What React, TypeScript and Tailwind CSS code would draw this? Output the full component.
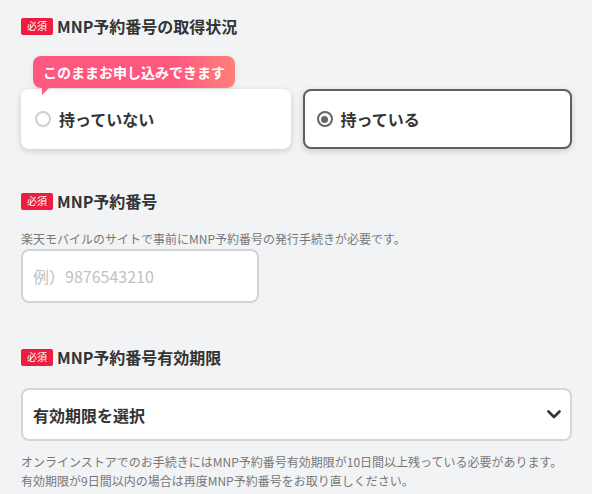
const font = {
  fontFamily: '"Noto Sans CJK JP", "Noto Sans", sans-serif',
};

function Required() {
  return (
    <span className="inline-flex h-[17px] w-8 items-center justify-center rounded-[2px] bg-[#ee1c40] text-[10px] leading-none text-white">
      必須
    </span>
  );
}

function SectionTitle({ children }: { children: React.ReactNode }) {
  return (
    <div className="flex h-6 items-center gap-1">
      <Required />
      <h2 className="text-base font-bold leading-6 text-[#333]">{children}</h2>
    </div>
  );
}

export default function App() {
  return (
    <div
      className="min-h-[494px] bg-[#f2f3f5] pb-4 pl-[21px] pr-[20px] pt-[14px] text-[#333]"
      style={font}
    >
      {/* 取得状況 */}
      <SectionTitle>MNP予約番号の取得状況</SectionTitle>
      <div className="mt-[51px] grid grid-cols-2 gap-3">
        <label className="relative flex h-[60px] items-center gap-2 rounded-lg border-2 border-white bg-white pl-3 shadow-[0_2px_6px_rgba(0,0,0,0.16)]">
          <div className="absolute -top-[35px] left-[10px] z-10">
            <div className="flex h-8 items-center rounded-lg bg-gradient-to-r from-[#ff5880] from-70% to-[#ff7f7a] px-[10px] text-sm font-bold text-white shadow-[0_2px_6px_rgba(0,0,0,0.08)]">
              このままお申し込みできます
            </div>
            <div className="ml-[9px] h-0 w-0 border-r-[7px] border-t-[7px] border-r-transparent border-t-[#ff5a7f]" />
          </div>
          <span className="h-4 w-4 rounded-full border-2 border-[#cfcfcf]" />
          <span className="text-base font-bold">持っていない</span>
        </label>
        <label className="flex h-[60px] items-center gap-2 rounded-lg border-2 border-[#5f5f5f] bg-white pl-3 shadow-[0_2px_6px_rgba(0,0,0,0.16)]">
          <span className="flex h-4 w-4 items-center justify-center rounded-full border-2 border-[#666]">
            <span className="h-[7px] w-[7px] rounded-full bg-[#666]" />
          </span>
          <span className="text-base font-bold">持っている</span>
        </label>
      </div>

      {/* 予約番号 */}
      <div className="mt-[40px]">
        <SectionTitle>MNP予約番号</SectionTitle>
      </div>
      <p className="mt-[17px] text-xs leading-[18px] text-[#777]">
        楽天モバイルのサイトで事前にMNP予約番号の発行手続きが必要です。
      </p>
      <input
        className="mt-px h-[54px] w-[238px] rounded-lg border-2 border-[#d4d4d6] bg-white px-[10px] text-base outline-none placeholder:text-[#c2c2c2]"
        placeholder="例）9876543210"
        style={font}
      />

      {/* 有効期限 */}
      <div className="mt-[42px]">
        <SectionTitle>MNP予約番号有効期限</SectionTitle>
      </div>
      <div className="mt-[19px] flex h-[53px] items-center justify-between rounded-lg border-2 border-[#d6d6d8] bg-white pl-[10px] pr-[9px]">
        <span className="text-base font-bold">有効期限を選択</span>
        <svg width="14" height="9" viewBox="0 0 14 9" fill="none">
          <path
            d="M1.5 1.5 L7 7 L12.5 1.5"
            stroke="#333"
            strokeWidth="2.6"
            strokeLinecap="round"
            strokeLinejoin="round"
          />
        </svg>
      </div>
      <p className="mt-[11px] text-xs leading-[19px] text-[#777]">
        オンラインストアでのお手続きにはMNP予約番号有効期限が10日間以上残っている必要があります。
        <br />
        有効期限が9日間以内の場合は再度MNP予約番号をお取り直しください。
      </p>
    </div>
  );
}
